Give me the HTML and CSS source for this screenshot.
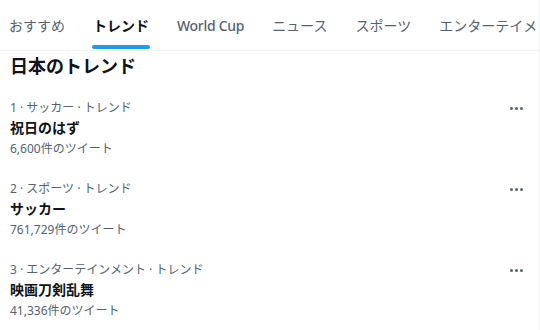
FILE: index.html
```html
<!DOCTYPE html>
<html lang="ja">
<head>
<meta charset="utf-8">
<link rel="stylesheet" href="styles.css">
</head>
<body>
<div class="page">
  <nav class="tabs">
    <div class="tab first">おすすめ</div>
    <div class="tab active"><span class="tab-label">トレンド</span></div>
    <div class="tab latin">World Cup</div>
    <div class="tab">ニュース</div>
    <div class="tab">スポーツ</div>
    <div class="tab">エンターテイメント</div>
  </nav>
  <h1 class="heading">日本のトレンド</h1>
  <div class="item">
    <div class="body">
      <div class="meta">1 · サッカー · トレンド</div>
      <div class="title">祝日のはず</div>
      <div class="count">6,600件のツイート</div>
    </div>
    <div class="more"><span></span><span></span><span></span></div>
  </div>
  <div class="item">
    <div class="body">
      <div class="meta">2 · スポーツ · トレンド</div>
      <div class="title">サッカー</div>
      <div class="count">761,729件のツイート</div>
    </div>
    <div class="more"><span></span><span></span><span></span></div>
  </div>
  <div class="item">
    <div class="body">
      <div class="meta">3 · エンターテインメント · トレンド</div>
      <div class="title">映画刀剣乱舞</div>
      <div class="count">41,336件のツイート</div>
    </div>
    <div class="more"><span></span><span></span><span></span></div>
  </div>
</div>
</body>
</html>
```
FILE: styles.css
```css
html, body {
  margin: 0;
  padding: 0;
  background: #ffffff;
}
body {
  font-family: "Noto Sans", "Noto Sans CJK JP", sans-serif;
  color: #0f1419;
}
.page {
  width: 539px;
  height: 330px;
  border-right: 1px solid #eff3f4;
  overflow: hidden;
}
.tabs {
  display: flex;
  height: 50px;
  border-bottom: 1px solid #eff3f4;
  overflow: hidden;
  white-space: nowrap;
}
.tab {
  flex: none;
  display: flex;
  align-items: center;
  padding: 0 14px;
  font-size: 14px;
  font-weight: 400;
  color: #536471;
}
.tab.latin {
  font-weight: 500;
  letter-spacing: -0.3px;
}
.tab.first {
  padding-left: 9px;
}
.tab.active {
  color: #0f1419;
  font-weight: 700;
}
.tab.active .tab-label {
  position: relative;
  display: flex;
  align-items: center;
  height: 100%;
}
.tab.active .tab-label::after {
  content: "";
  position: absolute;
  left: -1px;
  right: -1px;
  bottom: 1px;
  height: 4px;
  border-radius: 2px;
  background: #1d9bf0;
}
.heading {
  margin: 0;
  padding: 2px 10px 9px;
  font-size: 18px;
  line-height: 26px;
  font-weight: 700;
  color: #0f1419;
}
.item {
  display: flex;
  align-items: flex-start;
  padding: 12px 16px 12px 10px;
  height: 57px;
}
.body {
  flex: 1;
}
.meta, .count {
  font-size: 12px;
  line-height: 16px;
  color: #536471;
}
.title {
  margin-top: 2px;
  font-size: 14px;
  line-height: 20px;
  font-weight: 700;
  color: #0f1419;
}
.count {
  margin-top: 3px;
}
.more {
  display: flex;
  gap: 2px;
  height: 16px;
  align-items: center;
}
.more span {
  width: 3px;
  height: 3px;
  border-radius: 50%;
  background: #536471;
}
```
